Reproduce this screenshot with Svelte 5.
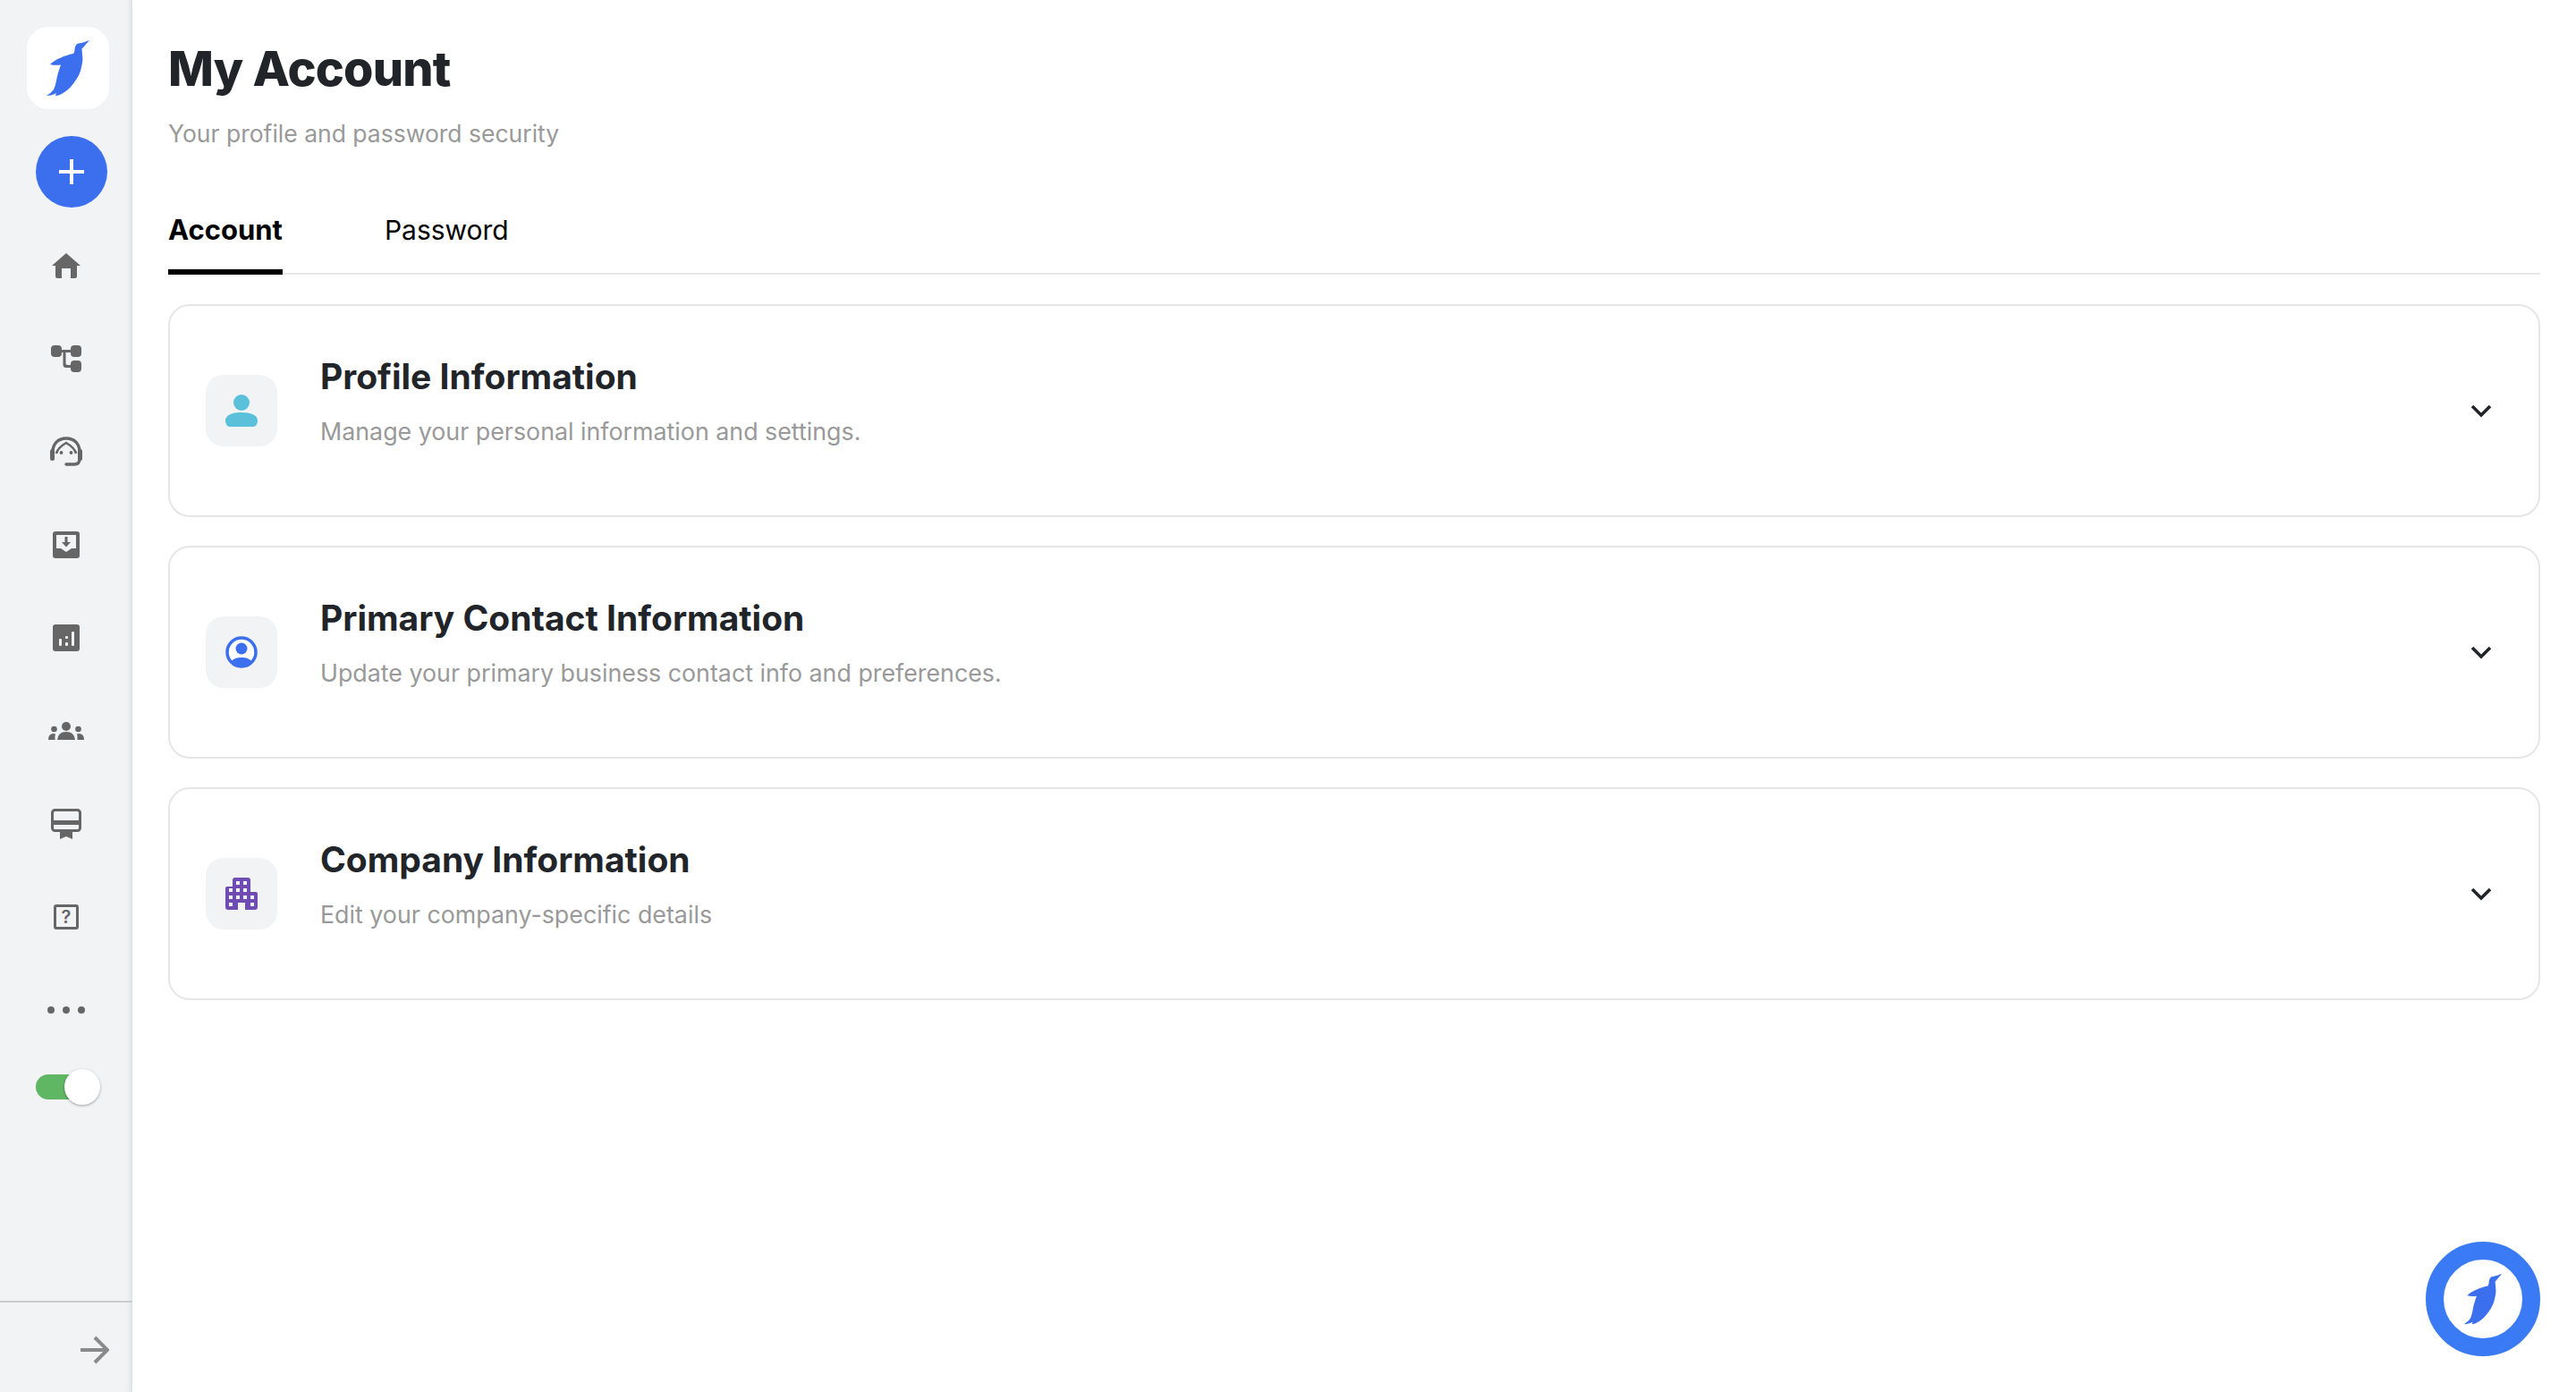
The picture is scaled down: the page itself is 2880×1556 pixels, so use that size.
<script lang="ts">
  const birdPath =
    'M100 45 C96 46.500 92 48 88 48.500 C85 49 84 52 83.500 55 C83.500 57 83 59 82 60 C77 61 72 62.500 68 64.500 C63 66.500 59 69 56 72 C60 73 64 73 68 72.500 C66 78 64 84 63 90 C62 95 61 98 60 100 C58 103 55 105 52 107 C56 107 60 106 63 104 L62 107 C66 107 69 105 72 103 C77 100 80 96 83 92 C87 87 90 81 91 75 C92 70 93 66 92 62 C92 59 91.500 57 91.500 54.500 C94 52 97 48 100 45 Z';

  const sections = [
    { title: 'Profile Information', text: 'Manage your personal information and settings.', icon: 'person' },
    { title: 'Primary Contact Information', text: 'Update your primary business contact info and preferences.', icon: 'contact' },
    { title: 'Company Information', text: 'Edit your company-specific details', icon: 'company' }
  ];

  let activeTab = $state('Account');
</script>

<div class="page">
  <aside class="sidebar">
    <div class="logo">
      <svg width="52" height="66" viewBox="50 43 52 66"><path d={birdPath} fill="#3b6fee" /></svg>
    </div>
    <button class="add" type="button" aria-label="Add">
      <svg width="28" height="28" viewBox="0 0 28 28"><path d="M14 0v28M0 14h28" stroke="#fff" stroke-width="4" /></svg>
    </button>

    <nav class="nav">
      <div class="nav-item">
        <svg width="32" height="30" viewBox="0 0 32 30" fill="#666">
          <path d="M16 1 L32 15 H28 V27 Q28 29 26 29 H21 V18 H11 V29 H6 Q4 29 4 27 V15 H0 Z" />
        </svg>
      </div>
      <div class="nav-item">
        <svg width="34" height="30" viewBox="0 0 34 30" fill="#666">
          <rect x="0" y="0" width="12" height="13" rx="4" />
          <rect x="22" y="0" width="12" height="13" rx="4" />
          <rect x="22" y="17" width="12" height="13" rx="4" />
          <path d="M12 5h10v3h-5.500v12q0 2 2 2h3.500v3h-5q-3.500 0-3.500-3.500V8H12z" />
        </svg>
      </div>
      <div class="nav-item">
        <svg width="36" height="34" viewBox="0 0 36 34" fill="none" stroke="#666">
          <path d="M3 20 V17 C3 8 9 2 18 2 C27 2 33 8 33 17 V25 Q33 31 27 31 H18" stroke-width="3.400" stroke-linecap="round" />
          <path d="M7 19 C8 14 13 10 18 7 C23 10 28 14 29 19" stroke-width="2.600" />
          <rect x="0" y="14" width="5" height="13" rx="2.500" fill="#666" stroke="none" />
          <rect x="31" y="14" width="5" height="13" rx="2.500" fill="#666" stroke="none" />
          <circle cx="12.500" cy="18" r="1.900" fill="#666" stroke="none" />
          <circle cx="23.500" cy="18" r="1.900" fill="#666" stroke="none" />
        </svg>
      </div>
      <div class="nav-item">
        <svg width="30" height="30" viewBox="0 0 30 30">
          <rect width="30" height="30" rx="3" fill="#666" />
          <path d="M4 4h22v15h-5l-6 4-6-4H4z" fill="#f2f3f5" />
          <path d="M13.500 6h3v6h3.500l-5 5.500-5-5.500h3.500z" fill="#666" />
        </svg>
      </div>
      <div class="nav-item">
        <svg width="30" height="30" viewBox="0 0 30 30">
          <rect width="30" height="30" rx="3" fill="#666" />
          <rect x="7" y="16" width="3" height="8" rx="1" fill="#f2f3f5" />
          <rect x="14" y="13" width="3" height="3" rx="1" fill="#f2f3f5" />
          <rect x="14" y="20" width="3" height="4" rx="1" fill="#f2f3f5" />
          <rect x="21" y="8" width="3" height="16" rx="1" fill="#f2f3f5" />
        </svg>
      </div>
      <div class="nav-item">
        <svg width="40" height="20" viewBox="0 0 40 20" fill="#666">
          <circle cx="20" cy="5" r="5" />
          <path d="M10 20 Q11 11 20 11 Q29 11 30 20 Z" />
          <circle cx="6.500" cy="8" r="3.300" />
          <circle cx="33.500" cy="8" r="3.300" />
          <path d="M0 20 Q0 13 6 13 L8 13.500 Q7 16 7.500 20 Z" />
          <path d="M40 20 Q40 13 34 13 L32 13.500 Q33 16 32.500 20 Z" />
        </svg>
      </div>
      <div class="nav-item">
        <svg width="34" height="34" viewBox="0 0 34 34">
          <rect x="1.500" y="1.500" width="31" height="23" rx="3" fill="none" stroke="#666" stroke-width="3" />
          <rect x="2" y="13" width="30" height="5" fill="#666" />
          <path d="M10 25h14v9l-7-3-7 3z" fill="#666" />
        </svg>
      </div>
      <div class="nav-item">
        <span class="help">?</span>
      </div>
      <div class="nav-item">
        <span class="dots"><i></i><i></i><i></i></span>
      </div>
    </nav>

    <div class="toggle-row">
      <div class="toggle"><span class="knob"></span></div>
    </div>

    <div class="side-foot">
      <svg width="32" height="32" viewBox="0 0 32 32" fill="none" stroke="#8a8a8a" stroke-width="4">
        <path d="M0 16h29M16 2l14 14-14 14" />
      </svg>
    </div>
  </aside>

  <main class="main">
    <h1>My Account</h1>
    <p class="lead">Your profile and password security</p>

    <div class="tabs">
      {#each ['Account', 'Password'] as tab}
        <button class="tab" class:active={activeTab === tab} type="button" onclick={() => (activeTab = tab)}>{tab}</button>
      {/each}
    </div>

    <div class="cards">
      {#each sections as section}
        <section class="card">
          <div class="tile">
            {#if section.icon === 'person'}
              <svg width="36" height="36" viewBox="0 0 36 36" fill="#5bc0d9">
                <circle cx="18" cy="9" r="9" />
                <path d="M0 29 C0 23 8 20 18 20 C28 20 36 23 36 29 C36 33 34 36 31 36 H5 C2 36 0 33 0 29 Z" />
              </svg>
            {:else if section.icon === 'contact'}
              <svg width="36" height="36" viewBox="0 0 36 36">
                <circle cx="18" cy="18" r="16" fill="#fff" stroke="#3b6fee" stroke-width="3.500" />
                <circle cx="18" cy="14" r="6.500" fill="#3b6fee" />
                <path d="M6 29 C9 25 13 24 18 24 C23 24 27 25 30 29 C27 33 23 35 18 35 C13 35 9 33 6 29 Z" fill="#3b6fee" />
              </svg>
            {:else}
              <svg width="36" height="36" viewBox="0 0 36 36">
                <path d="M0 12 Q0 10 2 10 H8 V3 Q8 0 11 0 H25 Q28 0 28 3 V16 H34 Q36 16 36 18 V33 Q36 36 33 36 H22 V28 H14 V36 H3 Q0 36 0 33 Z" fill="#6f4cb4" />
                <g fill="#f2f3f5">
                  <rect x="12" y="4" width="4" height="4" /><rect x="20" y="4" width="4" height="4" />
                  <rect x="4" y="12" width="4" height="4" /><rect x="12" y="12" width="4" height="4" /><rect x="20" y="12" width="4" height="4" />
                  <rect x="4" y="20" width="4" height="4" /><rect x="12" y="20" width="4" height="4" /><rect x="20" y="20" width="4" height="4" /><rect x="28" y="20" width="4" height="4" />
                  <rect x="4" y="28" width="4" height="4" /><rect x="28" y="28" width="4" height="4" />
                </g>
              </svg>
            {/if}
          </div>
          <div class="card-text">
            <h2>{section.title}</h2>
            <p>{section.text}</p>
          </div>
          <svg class="chevron" width="24" height="16" viewBox="0 0 24 16" fill="none" stroke="#212529" stroke-width="3.600">
            <path d="M2 3l10 10L22 3" />
          </svg>
        </section>
      {/each}
    </div>
  </main>

  <button class="fab" type="button" aria-label="Assistant">
    <svg width="46" height="60" viewBox="50 43 52 66" preserveAspectRatio="none"><path d={birdPath} fill="#3b6fee" /></svg>
  </button>
</div>

<style>
  :global(body) {
    margin: 0;
    background: #fff;
  }

  .page {
    display: flex;
    height: 100vh;
    font-family: Inter, "Noto Sans", sans-serif;
    color: #212529;
  }

  .sidebar {
    display: flex;
    flex-direction: column;
    flex-shrink: 0;
    box-sizing: border-box;
    width: 148px;
    padding-top: 30px;
    background: #f2f3f5;
    box-shadow: inset -7px 0 6px -5px rgba(0, 0, 0, 0.1);
  }

  .logo {
    display: flex;
    align-items: center;
    justify-content: center;
    width: 92px;
    height: 92px;
    margin-left: 30px;
    border-radius: 24px;
    background: #fff;
  }

  .add {
    display: flex;
    align-items: center;
    justify-content: center;
    width: 80px;
    height: 80px;
    margin: 30px 0 13px 40px;
    padding: 0;
    border: 0;
    border-radius: 50%;
    background: #3b6fee;
  }

  .nav {
    display: flex;
    flex-direction: column;
  }

  .nav-item {
    display: flex;
    align-items: center;
    justify-content: center;
    height: 104px;
  }

  .help {
    display: flex;
    align-items: center;
    justify-content: center;
    box-sizing: border-box;
    width: 28px;
    height: 28px;
    border: 3px solid #666;
    border-radius: 3px;
    color: #666;
    font-size: 20px;
    font-weight: 600;
    line-height: 1;
  }

  .dots {
    display: flex;
    gap: 9px;
  }

  .dots i {
    width: 8px;
    height: 8px;
    border-radius: 50%;
    background: #666;
  }

  .toggle-row {
    display: flex;
    align-items: center;
    height: 67px;
    padding-left: 40px;
  }

  .toggle {
    position: relative;
    width: 64px;
    height: 28px;
    border-radius: 14px;
    background: #5fb663;
  }

  .knob {
    position: absolute;
    top: -6px;
    left: 32px;
    width: 40px;
    height: 40px;
    border-radius: 50%;
    background: #fff;
    box-shadow: 0 1px 3px rgba(0, 0, 0, 0.35);
  }

  .side-foot {
    display: flex;
    align-items: center;
    justify-content: flex-end;
    box-sizing: border-box;
    height: 102px;
    margin-top: auto;
    padding: 6px 26px 0 0;
    border-top: 2px solid #ccc;
  }

  .main {
    flex: 1;
    min-width: 0;
    padding: 0 40px;
  }

  h1 {
    margin: 47px 0 0;
    font-size: 54px;
    font-weight: 800;
    line-height: 60px;
    letter-spacing: -0.8px;
  }

  .lead {
    margin: 24px 0 0;
    color: #999;
    font-size: 26.5px;
    line-height: 36px;
  }

  .tabs {
    display: flex;
    gap: 114px;
    margin-top: 72px;
    border-bottom: 2px solid #e8e8e8;
  }

  .tab {
    margin-bottom: -2px;
    padding: 0 0 26px;
    border: 0;
    border-bottom: 6px solid transparent;
    background: none;
    color: #000;
    font: 400 30px/36px Inter, sans-serif;
  }

  .tab.active {
    border-bottom-color: #000;
    font-size: 31px;
    font-weight: 700;
  }

  .cards {
    display: flex;
    flex-direction: column;
    gap: 32px;
    margin-top: 33px;
  }

  .card {
    display: flex;
    align-items: center;
    box-sizing: border-box;
    height: 238px;
    padding: 0 52px 0 40px;
    border: 2px solid #e6e6e6;
    border-radius: 24px;
  }

  .tile {
    display: flex;
    align-items: center;
    justify-content: center;
    flex-shrink: 0;
    width: 80px;
    height: 80px;
    border-radius: 20px;
    background: #f2f3f5;
  }

  .card-text {
    flex: 1;
    margin-left: 48px;
    padding-bottom: 21px;
  }

  h2 {
    margin: 0;
    font-size: 39px;
    font-weight: 700;
    line-height: 48px;
  }

  .card-text p {
    margin: 19px 0 0;
    color: #999;
    font-size: 26.8px;
    line-height: 36px;
  }

  .fab {
    position: fixed;
    right: 40px;
    bottom: 40px;
    display: flex;
    align-items: center;
    justify-content: center;
    box-sizing: border-box;
    width: 128px;
    height: 128px;
    padding: 0;
    border: 20px solid #3b7af5;
    border-radius: 50%;
    background: #fff;
  }
</style>
